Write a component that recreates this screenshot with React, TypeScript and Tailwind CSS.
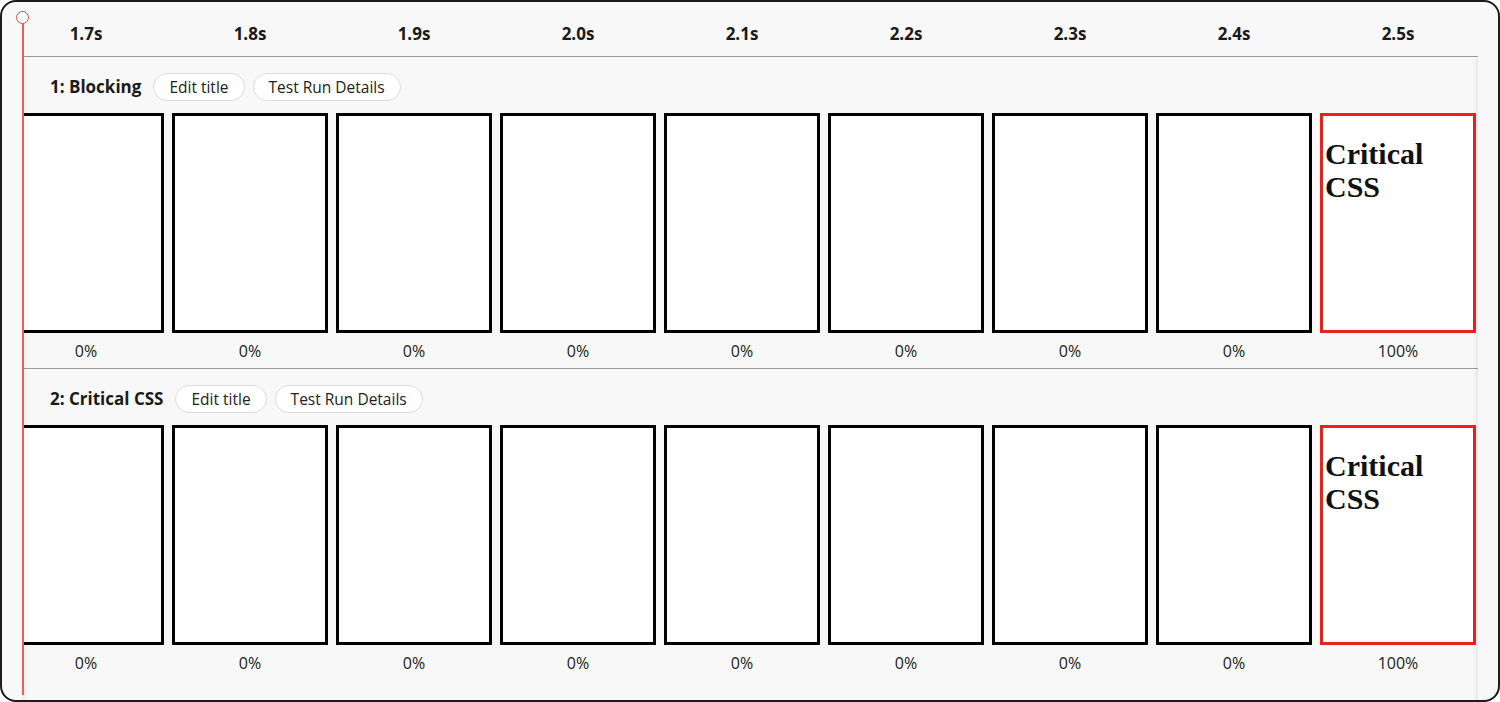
import React from "react";

const times = ["1.7s", "1.8s", "1.9s", "2.0s", "2.1s", "2.2s", "2.3s", "2.4s", "2.5s"];
const pcts = ["0%", "0%", "0%", "0%", "0%", "0%", "0%", "0%", "100%"];

function Frame({ last }: { last: boolean }) {
  return (
    <div
      className={
        "w-[156px] h-[220px] shrink-0 bg-white border-[3px] " +
        (last ? "border-[#e5251c]" : "border-black")
      }
    >
      {last && (
        <div
          className="pl-[2px] pt-[21px] text-[30px] leading-[33px] font-bold text-[#111]"
          style={{ fontFamily: '"Liberation Serif", "Times New Roman", serif' }}
        >
          Critical CSS
        </div>
      )}
    </div>
  );
}

function Row({ title, last }: { title: string; last: boolean }) {
  return (
    <div className={last ? "" : "border-b border-[#9b9b9b]"}>
      <div className="flex items-center gap-[8px] pl-[28px] pt-[16px] pb-[12px]">
        <span className="text-[17px] font-bold text-[#1a1a1a] mr-[4px] leading-[28px]">{title}</span>
        <button className="h-[28px] px-[15px] rounded-full border border-[#dcdcdc] bg-white text-[15.5px] text-[#222] leading-[26px]">
          Edit title
        </button>
        <button className="h-[28px] px-[15px] rounded-full border border-[#dcdcdc] bg-white text-[15.5px] text-[#222] leading-[26px]">
          Test Run Details
        </button>
      </div>
      <div className="ml-[-14px]">
        <div className="flex gap-[8px]">
          {pcts.map((_, i) => (
            <Frame key={i} last={i === pcts.length - 1} />
          ))}
        </div>
        <div className="flex gap-[8px] pt-[7px] pb-[6px]">
          {pcts.map((p, i) => (
            <div key={i} className="w-[156px] shrink-0 text-center text-[16px] leading-[22px] text-[#1a1a1a]">
              {p}
            </div>
          ))}
        </div>
      </div>
    </div>
  );
}

export default function App() {
  return (
    <div
      className="w-[1500px] h-[702px] bg-white"
      style={{ fontFamily: '"Open Sans", "Noto Sans", Arial, sans-serif' }}
    >
      <div className="relative h-full border-2 border-[#1c1c1c] rounded-[16px] bg-[#f8f8f8] overflow-hidden flex">
        <div className="w-[20px] shrink-0" />
        <div className="relative w-[1456px] shrink-0 overflow-hidden">
          <div className="h-[55px] border-b border-[#9b9b9b]">
            <div className="ml-[-14px] flex gap-[8px] pt-[22px]">
              {times.map((t) => (
                <div key={t} className="w-[156px] shrink-0 text-center text-[17px] leading-[20px] font-bold text-[#1a1a1a]">
                  {t}
                </div>
              ))}
            </div>
          </div>
          <Row title="1: Blocking" last={false} />
          <Row title="2: Critical CSS" last={true} />
          <div className="absolute top-[57px] bottom-0 left-0 w-[6px] bg-gradient-to-r from-black/5 to-transparent" />
          <div className="absolute top-[57px] bottom-0 right-0 w-[5px] bg-gradient-to-l from-black/[0.07] to-transparent" />
        </div>
        <div className="absolute left-[20px] top-[21px] bottom-[5px] w-[2px] bg-[#ec5f52]" />
        <div className="absolute left-[14px] top-[9px] w-[13px] h-[13px] rounded-full border-[1.5px] border-[#e8453c] bg-white" />
      </div>
    </div>
  );
}
